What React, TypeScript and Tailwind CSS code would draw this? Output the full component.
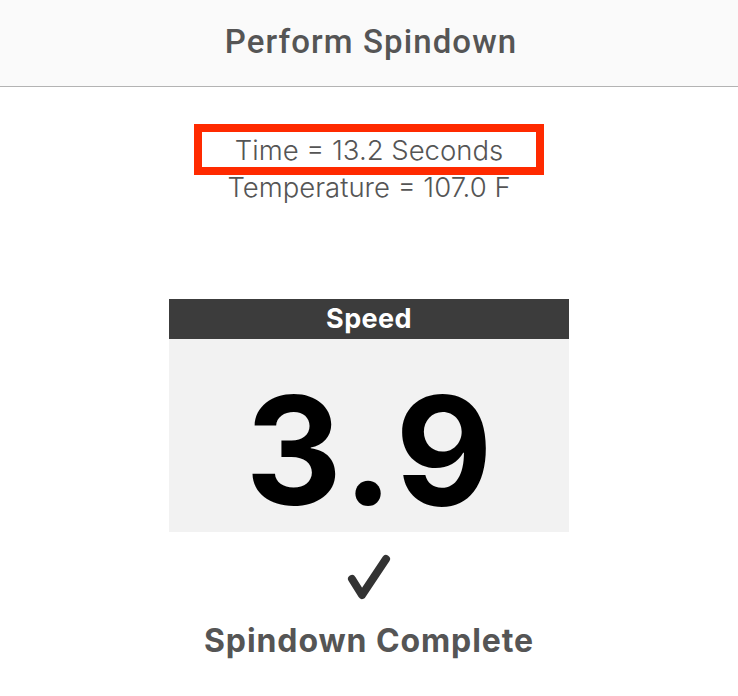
export default function App() {
  return (
    <div className="w-[738px] h-[696px] bg-white flex flex-col items-center" style={{ fontFamily: 'Roboto, "Noto Sans", sans-serif' }}>
      <header className="w-full h-[87px] bg-[#fafafa] border-b border-[#b3b3b3] flex items-center justify-center">
        <h1 className="text-[33px] font-medium text-[#555555] tracking-[1.1px] mt-[-2px] ml-[4px]">Perform Spindown</h1>
      </header>

      <div className="mt-[37px] flex flex-col items-center text-[#555555] text-[27.5px] leading-[32px]" style={{ fontFamily: 'Inter, Roboto, sans-serif' }}>
        <div className="w-[350px] h-[51px] border-[8px] border-[#ff2a00] flex items-center justify-center">
          <span className="font-light">Time = 13.2 Seconds</span>
        </div>
        <div className="-mt-[4px] font-light">Temperature = 107.0 F</div>
      </div>

      <div className="mt-[96px] w-[400px] flex flex-col" style={{ fontFamily: 'Inter, Roboto, sans-serif' }}>
        <div className="h-[40px] bg-[#3c3c3c] flex items-center justify-center">
          <span className="text-white text-[27px] font-bold tracking-[0.4px]">Speed</span>
        </div>
        <div className="h-[193px] bg-[#f2f2f2] flex items-center justify-center">
          <span className="text-black text-[150px] font-bold leading-none tracking-[4px] ml-[4px] mt-[30px]">3.9</span>
        </div>
      </div>

      <svg className="mt-[21px]" width="46" height="48" viewBox="0 0 46 48">
        <polyline points="6,26 16,42 40,6" fill="none" stroke="#333333" strokeWidth="8" strokeLinecap="round" strokeLinejoin="round" />
      </svg>

      <div className="mt-[16px] text-[32px] font-bold text-[#555555] tracking-[0.9px]" style={{ fontFamily: 'Inter, Roboto, sans-serif' }}>
        Spindown Complete
      </div>
    </div>
  );
}
